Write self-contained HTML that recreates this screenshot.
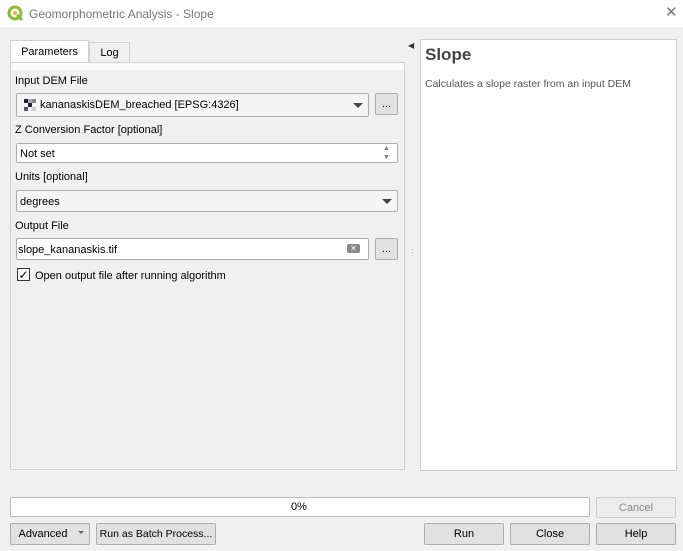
<!DOCTYPE html><html><head><style>
body{margin:0;width:683px;height:551px;background:#f0f0f0;font-family:"Liberation Sans",sans-serif;font-size:11px;color:#000;position:relative;overflow:hidden}
.a{position:absolute;box-sizing:border-box}
.in{background:#fff;border:1px solid #adadad;border-radius:2px}
.btn{background:#e1e1e1;border:1px solid #adadad;border-radius:2px;text-align:center;line-height:20px}
.arr{width:0;height:0;border-left:5px solid transparent;border-right:5px solid transparent;border-top:5px solid #444}
</style></head><body>
<div class="a" style="left:0;top:0;width:683px;height:27px;background:#fff"></div>
<svg class="a" style="left:7px;top:5px" width="16" height="16"><circle cx="8" cy="8" r="6" fill="none" stroke="#8bbb3c" stroke-width="3"/><circle cx="8" cy="8" r="2" fill="#e9b530"/><path d="M10 10 L15 15" stroke="#8bbb3c" stroke-width="3"/></svg>
<div class="a" style="left:29px;top:7px;font-size:12px;color:#777">Geomorphometric Analysis - Slope</div>
<div class="a" style="left:665px;top:3px;font-size:15px;color:#777">✕</div>
<div class="a" style="left:10px;top:40px;width:79px;height:23px;background:#fff;border:1px solid #d0d0d0;border-bottom:none;text-align:center;line-height:22px">Parameters</div>
<div class="a" style="left:89px;top:42px;width:41px;height:21px;background:#f0f0f0;border:1px solid #d0d0d0;border-bottom:none;text-align:center;line-height:21px">Log</div>
<div class="a" style="left:10px;top:62px;width:395px;height:408px;border:1px solid #d0d0d0;background:#f0f0f0"></div>
<div class="a" style="left:11px;top:63px;width:393px;height:7px;background:#fbfbfb"></div>
<div class="a" style="left:15px;top:75px">Input DEM File</div>
<div class="a in" style="left:16px;top:93px;width:353px;height:24px;background:#f5f5f5"></div>
<svg class="a" style="left:24px;top:99px" width="12" height="12"><rect x="0" y="0" width="4" height="4" fill="#223"/><rect x="4" y="4" width="4" height="4" fill="#223"/><rect x="8" y="0" width="4" height="4" fill="#889"/><rect x="0" y="8" width="4" height="4" fill="#556"/><rect x="8" y="8" width="4" height="4" fill="#ccd"/><rect x="4" y="0" width="4" height="4" fill="#aab"/></svg>
<div class="a" style="left:40px;top:99px">kananaskisDEM_breached [EPSG:4326]</div>
<div class="a arr" style="left:353px;top:103px"></div>
<div class="a btn" style="left:375px;top:93px;width:23px;height:22px">...</div>
<div class="a" style="left:15px;top:124px">Z Conversion Factor [optional]</div>
<div class="a in" style="left:16px;top:143px;width:382px;height:20px"></div>
<div class="a" style="left:20px;top:148px">Not set</div>
<div class="a" style="left:383px;top:144px;font-size:7px;color:#777;line-height:9px">▲<br>▼</div>
<div class="a" style="left:15px;top:171px">Units [optional]</div>
<div class="a in" style="left:16px;top:190px;width:382px;height:22px;background:#f5f5f5"></div>
<div class="a" style="left:20px;top:196px">degrees</div>
<div class="a arr" style="left:382px;top:199px"></div>
<div class="a" style="left:15px;top:220px">Output File</div>
<div class="a in" style="left:16px;top:238px;width:353px;height:22px"></div>
<div class="a" style="left:18px;top:244px">slope_kananaskis.tif</div>
<div class="a" style="left:347px;top:244px;width:13px;height:9px;background:#888;border-radius:2px;color:#fff;font-size:8px;line-height:9px;text-align:center">✕</div>
<div class="a btn" style="left:375px;top:238px;width:23px;height:22px">...</div>
<div class="a" style="left:17px;top:268px;width:13px;height:13px;background:#fff;border:1px solid #333;font-size:12px;line-height:12px;text-align:center">✓</div>
<div class="a" style="left:35px;top:270px">Open output file after running algorithm</div>
<div class="a" style="left:408px;top:41px;font-size:8px;color:#333">◀</div>
<div class="a" style="left:411px;top:248px;font-size:8px;color:#aaa;line-height:3px">·<br>·<br>·</div>
<div class="a" style="left:420px;top:39px;width:257px;height:432px;background:#fff;border:1px solid #ccc"></div>
<div class="a" style="left:425px;top:45px;font-size:17px;font-weight:bold;color:#444">Slope</div>
<div class="a" style="left:425px;top:78px;font-size:10.5px;color:#555">Calculates a slope raster from an input DEM</div>
<div class="a in" style="left:10px;top:497px;width:580px;height:20px;border-color:#bcbcbc"></div>
<div class="a" style="left:291px;top:501px;font-size:11px">0%</div>
<div class="a btn" style="left:596px;top:497px;width:80px;height:21px;color:#888;background:#ececec;border-color:#ccc">Cancel</div>
<div class="a btn" style="left:10px;top:523px;width:80px;height:22px"><span style="margin-right:14px">Advanced</span></div>
<div class="a" style="left:78px;top:531px;border-left:3px solid transparent;border-right:3px solid transparent;border-top:3px solid #666"></div>
<div class="a btn" style="left:96px;top:523px;width:120px;height:22px;font-size:10.5px">Run as Batch Process...</div>
<div class="a btn" style="left:424px;top:523px;width:80px;height:22px">Run</div>
<div class="a btn" style="left:510px;top:523px;width:80px;height:22px">Close</div>
<div class="a btn" style="left:596px;top:523px;width:80px;height:22px">Help</div>
</body></html>
